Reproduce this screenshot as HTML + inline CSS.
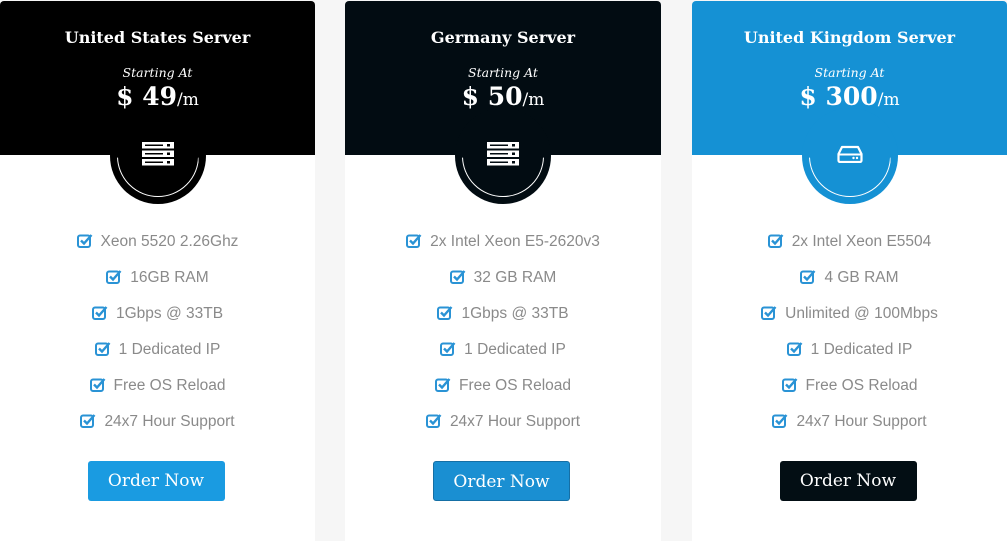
<!DOCTYPE html>
<html><head><style>
*{margin:0;padding:0;box-sizing:border-box}
body{width:1007px;height:529px;background:#f6f6f6;overflow:hidden;position:relative;font-family:"Liberation Sans",sans-serif}
.card{position:absolute;top:1px;width:316px;height:540px;background:#fff;border-radius:4px 4px 0 0;overflow:hidden}
.hd{position:absolute;left:0;top:0;width:100%;height:154px;color:#fff;text-align:center;font-family:"DejaVu Serif","Liberation Serif",serif}
.t{position:absolute;top:27px;width:100%;font-size:16px;font-weight:bold}
.s{position:absolute;top:64px;width:100%;font-size:12.5px;font-style:italic}
.p{position:absolute;top:81px;width:100%;font-size:25px;font-weight:bold}
.p span{font-size:17px;font-weight:normal}
.c{position:absolute;left:50%;top:107px;width:96px;height:96px;margin-left:-48px;border-radius:50%}
.arc{position:absolute;left:7px;top:7px;width:82px;height:82px;border-radius:50%;border:1.5px solid #fff;clip-path:inset(52% 0 0 0)}
.ic{position:absolute;left:32px;top:34px}
ul{position:absolute;top:229px;width:100%;list-style:none;text-align:center;font-size:15.5px;color:#8a8a8a}
li{height:36px;line-height:24px}
li svg{vertical-align:-2px;margin-right:8px}
.b{position:absolute;top:460px;left:50%;margin-left:-70px;width:137px;height:40px;border-radius:3px;color:#fff;font-family:"DejaVu Serif","Liberation Serif",serif;font-size:17px;text-align:center;line-height:40px}
</style></head><body>

<div class="card" style="left:0;width:315px">
 <div class="hd" style="background:#000">
  <div class="t">United States Server</div><div class="s">Starting At</div><div class="p">$ 49<span>/m</span></div>
 </div>
 <div class="c" style="background:#000"><div class="arc"></div>
  <svg class="ic" width="32" height="24" viewBox="0 0 32 24"><g fill="#fff"><rect x="0" y="0" width="32" height="6.5"/><rect x="0" y="8.5" width="32" height="6.5"/><rect x="0" y="17" width="32" height="6.5"/></g><g fill="#000"><rect x="3" y="2.5" width="18" height="1.5"/><rect x="3" y="11" width="18" height="1.5"/><rect x="3" y="19.5" width="18" height="1.5"/><rect x="25" y="2" width="3" height="2.5"/><rect x="25" y="10.5" width="3" height="2.5"/><rect x="25" y="19" width="3" height="2.5"/></g></svg>
 </div>
 <ul>
  <li><svg width="16" height="15" viewBox="0 0 16 15"><rect x="1" y="2.5" width="12" height="11.5" rx="2" fill="none" stroke="#2a93d5" stroke-width="2"/><path d="M4 7.5l3 3 7.5-8.5" fill="none" stroke="#2a93d5" stroke-width="2.4"/></svg>Xeon 5520 2.26Ghz</li>
  <li><svg width="16" height="15" viewBox="0 0 16 15"><rect x="1" y="2.5" width="12" height="11.5" rx="2" fill="none" stroke="#2a93d5" stroke-width="2"/><path d="M4 7.5l3 3 7.5-8.5" fill="none" stroke="#2a93d5" stroke-width="2.4"/></svg>16GB RAM</li>
  <li><svg width="16" height="15" viewBox="0 0 16 15"><rect x="1" y="2.5" width="12" height="11.5" rx="2" fill="none" stroke="#2a93d5" stroke-width="2"/><path d="M4 7.5l3 3 7.5-8.5" fill="none" stroke="#2a93d5" stroke-width="2.4"/></svg>1Gbps @ 33TB</li>
  <li><svg width="16" height="15" viewBox="0 0 16 15"><rect x="1" y="2.5" width="12" height="11.5" rx="2" fill="none" stroke="#2a93d5" stroke-width="2"/><path d="M4 7.5l3 3 7.5-8.5" fill="none" stroke="#2a93d5" stroke-width="2.4"/></svg>1 Dedicated IP</li>
  <li><svg width="16" height="15" viewBox="0 0 16 15"><rect x="1" y="2.5" width="12" height="11.5" rx="2" fill="none" stroke="#2a93d5" stroke-width="2"/><path d="M4 7.5l3 3 7.5-8.5" fill="none" stroke="#2a93d5" stroke-width="2.4"/></svg>Free OS Reload</li>
  <li><svg width="16" height="15" viewBox="0 0 16 15"><rect x="1" y="2.5" width="12" height="11.5" rx="2" fill="none" stroke="#2a93d5" stroke-width="2"/><path d="M4 7.5l3 3 7.5-8.5" fill="none" stroke="#2a93d5" stroke-width="2.4"/></svg>24x7 Hour Support</li>
 </ul>
 <div class="b" style="background:#1a9be1">Order Now</div>
</div>

<div class="card" style="left:345px">
 <div class="hd" style="background:#020c12">
  <div class="t">Germany Server</div><div class="s">Starting At</div><div class="p">$ 50<span>/m</span></div>
 </div>
 <div class="c" style="background:#020c12"><div class="arc"></div>
  <svg class="ic" width="32" height="24" viewBox="0 0 32 24"><g fill="#fff"><rect x="0" y="0" width="32" height="6.5"/><rect x="0" y="8.5" width="32" height="6.5"/><rect x="0" y="17" width="32" height="6.5"/></g><g fill="#020c12"><rect x="3" y="2.5" width="18" height="1.5"/><rect x="3" y="11" width="18" height="1.5"/><rect x="3" y="19.5" width="18" height="1.5"/><rect x="25" y="2" width="3" height="2.5"/><rect x="25" y="10.5" width="3" height="2.5"/><rect x="25" y="19" width="3" height="2.5"/></g></svg>
 </div>
 <ul>
  <li><svg width="16" height="15" viewBox="0 0 16 15"><rect x="1" y="2.5" width="12" height="11.5" rx="2" fill="none" stroke="#2a93d5" stroke-width="2"/><path d="M4 7.5l3 3 7.5-8.5" fill="none" stroke="#2a93d5" stroke-width="2.4"/></svg>2x Intel Xeon E5-2620v3</li>
  <li><svg width="16" height="15" viewBox="0 0 16 15"><rect x="1" y="2.5" width="12" height="11.5" rx="2" fill="none" stroke="#2a93d5" stroke-width="2"/><path d="M4 7.5l3 3 7.5-8.5" fill="none" stroke="#2a93d5" stroke-width="2.4"/></svg>32 GB RAM</li>
  <li><svg width="16" height="15" viewBox="0 0 16 15"><rect x="1" y="2.5" width="12" height="11.5" rx="2" fill="none" stroke="#2a93d5" stroke-width="2"/><path d="M4 7.5l3 3 7.5-8.5" fill="none" stroke="#2a93d5" stroke-width="2.4"/></svg>1Gbps @ 33TB</li>
  <li><svg width="16" height="15" viewBox="0 0 16 15"><rect x="1" y="2.5" width="12" height="11.5" rx="2" fill="none" stroke="#2a93d5" stroke-width="2"/><path d="M4 7.5l3 3 7.5-8.5" fill="none" stroke="#2a93d5" stroke-width="2.4"/></svg>1 Dedicated IP</li>
  <li><svg width="16" height="15" viewBox="0 0 16 15"><rect x="1" y="2.5" width="12" height="11.5" rx="2" fill="none" stroke="#2a93d5" stroke-width="2"/><path d="M4 7.5l3 3 7.5-8.5" fill="none" stroke="#2a93d5" stroke-width="2.4"/></svg>Free OS Reload</li>
  <li><svg width="16" height="15" viewBox="0 0 16 15"><rect x="1" y="2.5" width="12" height="11.5" rx="2" fill="none" stroke="#2a93d5" stroke-width="2"/><path d="M4 7.5l3 3 7.5-8.5" fill="none" stroke="#2a93d5" stroke-width="2.4"/></svg>24x7 Hour Support</li>
 </ul>
 <div class="b" style="background:#1a8fd2;border:1px solid #156fa5">Order Now</div>
</div>

<div class="card" style="left:692px;width:315px">
 <div class="hd" style="background:#1591d4">
  <div class="t">United Kingdom Server</div><div class="s">Starting At</div><div class="p">$ 300<span>/m</span></div>
 </div>
 <div class="c" style="background:#1591d4"><div class="arc"></div>
  <svg class="ic" style="left:35px;top:37px" width="26" height="18" viewBox="0 0 26 18"><path d="M5 2h16l3.5 7v6.5a1.5 1.5 0 0 1-1.5 1.5H3a1.5 1.5 0 0 1-1.5-1.5V9z" fill="none" stroke="#fff" stroke-width="2.2" stroke-linejoin="round"/><path d="M2 9.5h22" stroke="#fff" stroke-width="2"/><circle cx="16.5" cy="13" r="1.2" fill="#fff"/><circle cx="20" cy="13" r="1.2" fill="#fff"/></svg>
 </div>
 <ul>
  <li><svg width="16" height="15" viewBox="0 0 16 15"><rect x="1" y="2.5" width="12" height="11.5" rx="2" fill="none" stroke="#2a93d5" stroke-width="2"/><path d="M4 7.5l3 3 7.5-8.5" fill="none" stroke="#2a93d5" stroke-width="2.4"/></svg>2x Intel Xeon E5504</li>
  <li><svg width="16" height="15" viewBox="0 0 16 15"><rect x="1" y="2.5" width="12" height="11.5" rx="2" fill="none" stroke="#2a93d5" stroke-width="2"/><path d="M4 7.5l3 3 7.5-8.5" fill="none" stroke="#2a93d5" stroke-width="2.4"/></svg>4 GB RAM</li>
  <li><svg width="16" height="15" viewBox="0 0 16 15"><rect x="1" y="2.5" width="12" height="11.5" rx="2" fill="none" stroke="#2a93d5" stroke-width="2"/><path d="M4 7.5l3 3 7.5-8.5" fill="none" stroke="#2a93d5" stroke-width="2.4"/></svg>Unlimited @ 100Mbps</li>
  <li><svg width="16" height="15" viewBox="0 0 16 15"><rect x="1" y="2.5" width="12" height="11.5" rx="2" fill="none" stroke="#2a93d5" stroke-width="2"/><path d="M4 7.5l3 3 7.5-8.5" fill="none" stroke="#2a93d5" stroke-width="2.4"/></svg>1 Dedicated IP</li>
  <li><svg width="16" height="15" viewBox="0 0 16 15"><rect x="1" y="2.5" width="12" height="11.5" rx="2" fill="none" stroke="#2a93d5" stroke-width="2"/><path d="M4 7.5l3 3 7.5-8.5" fill="none" stroke="#2a93d5" stroke-width="2.4"/></svg>Free OS Reload</li>
  <li><svg width="16" height="15" viewBox="0 0 16 15"><rect x="1" y="2.5" width="12" height="11.5" rx="2" fill="none" stroke="#2a93d5" stroke-width="2"/><path d="M4 7.5l3 3 7.5-8.5" fill="none" stroke="#2a93d5" stroke-width="2.4"/></svg>24x7 Hour Support</li>
 </ul>
 <div class="b" style="background:#030e14">Order Now</div>
</div>
</body></html>
